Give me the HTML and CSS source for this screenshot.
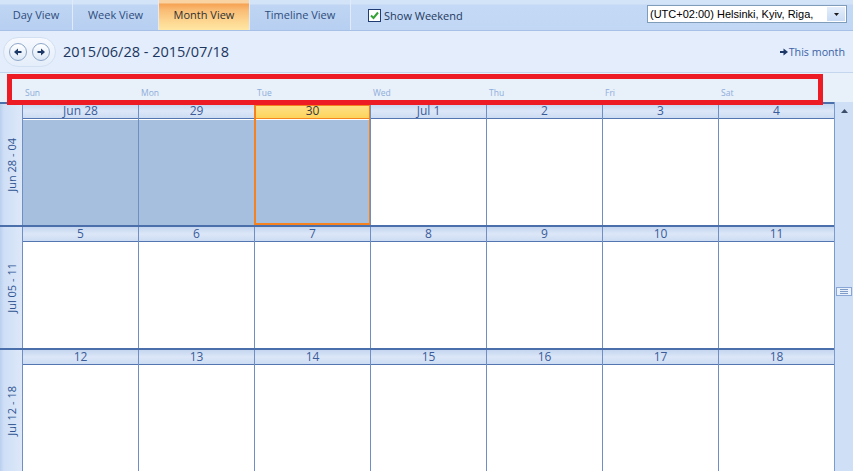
FILE: index.html
```html
<!DOCTYPE html>
<html>
<head>
<meta charset="utf-8">
<link rel="stylesheet" href="styles.css">
</head>
<body>
<div class="toolbar">
  <div class="tab tab-day">Day View</div>
  <div class="tab tab-week">Week View</div>
  <div class="tab tab-month active">Month View</div>
  <div class="tab tab-timeline">Timeline View</div>
  <div class="weekend">
    <span class="check"><svg width="11" height="11" viewBox="0 0 11 11"><polyline points="2,5.5 4.5,8 9,2.5" fill="none" stroke="#36a336" stroke-width="2"/></svg></span>
    <span>Show Weekend</span>
  </div>
  <div class="tz">
    <span class="tz-text">(UTC+02:00) Helsinki, Kyiv, Riga,</span>
    <span class="tz-btn"><svg width="5" height="3" viewBox="0 0 5 3"><polygon points="0,0 5,0 2.5,3" fill="#1a1a1a"/></svg></span>
  </div>
</div>

<div class="nav">
  <div class="pill">
    <span class="circ"><svg width="10" height="10" viewBox="0 0 10 10"><polygon points="1,5 5,1.5 5,8.5" fill="#1d3866"/><rect x="4.5" y="4" width="4" height="2" fill="#1d3866"/></svg></span>
    <span class="circ"><svg width="10" height="10" viewBox="0 0 10 10"><polygon points="9,5 5,1.5 5,8.5" fill="#1d3866"/><rect x="1.5" y="4" width="4" height="2" fill="#1d3866"/></svg></span>
  </div>
  <div class="range">2015/06/28 - 2015/07/18</div>
  <div class="thismonth"><svg width="8" height="8" viewBox="0 0 8 8"><polygon points="3.5,0.5 8,4 3.5,7.5" fill="#1d3866"/><rect x="0" y="3" width="4" height="2" fill="#1d3866"/></svg><span>This month</span></div>
</div>

<div class="dayhead">
  <div></div>
  <div class="dh">Sun</div>
  <div class="dh">Mon</div>
  <div class="dh">Tue</div>
  <div class="dh">Wed</div>
  <div class="dh">Thu</div>
  <div class="dh">Fri</div>
  <div class="dh">Sat</div>
  <div></div>
  <div class="annot"></div>
</div>

<div class="grid">
  <div class="weeks">
    <div class="week">
      <div class="wlabel"><span>Jun 28 - 04</span></div>
      <div class="day sel"><div class="dhdr">Jun 28</div><div class="dbody"></div></div>
      <div class="day sel"><div class="dhdr">29</div><div class="dbody"></div></div>
      <div class="day sel today"><div class="dhdr">30</div><div class="dbody"></div></div>
      <div class="day"><div class="dhdr">Jul 1</div><div class="dbody"></div></div>
      <div class="day"><div class="dhdr">2</div><div class="dbody"></div></div>
      <div class="day"><div class="dhdr">3</div><div class="dbody"></div></div>
      <div class="day"><div class="dhdr">4</div><div class="dbody"></div></div>
    </div>
    <div class="week">
      <div class="wlabel"><span>Jul 05 - 11</span></div>
      <div class="day"><div class="dhdr">5</div><div class="dbody"></div></div>
      <div class="day"><div class="dhdr">6</div><div class="dbody"></div></div>
      <div class="day"><div class="dhdr">7</div><div class="dbody"></div></div>
      <div class="day"><div class="dhdr">8</div><div class="dbody"></div></div>
      <div class="day"><div class="dhdr">9</div><div class="dbody"></div></div>
      <div class="day"><div class="dhdr">10</div><div class="dbody"></div></div>
      <div class="day"><div class="dhdr">11</div><div class="dbody"></div></div>
    </div>
    <div class="week">
      <div class="wlabel"><span>Jul 12 - 18</span></div>
      <div class="day"><div class="dhdr">12</div><div class="dbody"></div></div>
      <div class="day"><div class="dhdr">13</div><div class="dbody"></div></div>
      <div class="day"><div class="dhdr">14</div><div class="dbody"></div></div>
      <div class="day"><div class="dhdr">15</div><div class="dbody"></div></div>
      <div class="day"><div class="dhdr">16</div><div class="dbody"></div></div>
      <div class="day"><div class="dhdr">17</div><div class="dbody"></div></div>
      <div class="day"><div class="dhdr">18</div><div class="dbody"></div></div>
    </div>
  </div>
  <div class="scroll">
    <div class="up"><svg width="7" height="4" viewBox="0 0 7 4"><polygon points="0,4 7,4 3.5,0" fill="#3b4d69"/></svg></div>
    <div class="thumb"><span></span><span></span><span></span></div>
  </div>
</div>
</body>
</html>
```

FILE: styles.css
```css
* { box-sizing: border-box; }
html, body { margin: 0; padding: 0; }
body {
  width: 853px;
  height: 471px;
  overflow: hidden;
  background: #ffffff;
  font-family: "Open Sans", "Noto Sans", sans-serif;
}

/* ---------- toolbar ---------- */
.toolbar {
  display: flex;
  height: 31px;
  border-bottom: 1px solid #a6c0e6;
  background: linear-gradient(#d3e3f8 0, #d3e3f8 4px, #c4d9f5 5px, #c1d7f4 100%);
}
.tab {
  height: 30px;
  line-height: 30px;
  text-align: center;
  font-size: 11px;
  color: #2e4d7b;
  border-right: 1px solid #e0eafa;
  background: linear-gradient(#d3e3f8 0, #d3e3f8 4px, #bfd5f3 5px, #b7cff1 100%);
  white-space: nowrap;
}
.tab-day { width: 73px; }
.tab-week { width: 86px; }
.tab-month { width: 91px; }
.tab-timeline { width: 101px; }
.tab.active {
  color: #303030;
  background: linear-gradient(#f9d3a2 0, #f9d3a2 3px, #f6a253 4px, #f9bd76 35%, #fdd993 75%, #ffe7a4 100%);
}
.weekend {
  display: flex;
  align-items: center;
  gap: 3px;
  padding-left: 17px;
  font-size: 11px;
  color: #1e3a5f;
}
.check {
  width: 13px;
  height: 13px;
  border: 1px solid #1f3d73;
  background: #ffffff;
  display: flex;
  align-items: center;
  justify-content: center;
}
.tz {
  margin-left: auto;
  margin-right: 6px;
  margin-top: 5px;
  width: 200px;
  height: 18px;
  border: 1px solid #7f9db9;
  background: #ffffff;
  display: flex;
}
.tz-text {
  flex: 1;
  font-family: "Liberation Sans", Arial, sans-serif;
  font-size: 11px;
  line-height: 16px;
  padding-left: 2px;
  color: #000000;
  white-space: nowrap;
}
.tz-btn {
  width: 18px;
  margin: 1px;
  display: flex;
  align-items: center;
  justify-content: center;
  background: linear-gradient(#e4eefb, #c9dbf4);
}

/* ---------- nav row ---------- */
.nav {
  display: flex;
  align-items: center;
  height: 42px;
  padding-left: 3px;
  background: #e3edfb;
  border-bottom: 1px solid #c4d5ee;
}
.pill {
  display: flex;
  align-items: center;
  gap: 5px;
  height: 30px;
  padding: 0 5px;
  border: 1px solid #d3e0f2;
  border-radius: 15px;
  background: linear-gradient(#f6f9fe, #e4edfa);
}
.circ {
  width: 18px;
  height: 18px;
  border-radius: 50%;
  border: 1px solid #8ea6c9;
  background: linear-gradient(#ffffff, #dce7f6);
  display: flex;
  align-items: center;
  justify-content: center;
}
.range {
  margin-left: 7px;
  font-size: 14.5px;
  color: #1b365f;
  white-space: nowrap;
}
.thismonth {
  margin-left: auto;
  margin-right: 8px;
  display: flex;
  align-items: center;
  gap: 1px;
  font-size: 10.7px;
  color: #3b63a6;
}

/* ---------- day-name header ---------- */
.dayhead {
  position: relative;
  display: grid;
  grid-template-columns: 22px repeat(7, 116px) 19px;
  height: 29px;
  background: #e8f0fa;
}
.dh {
  padding-left: 3px;
  padding-top: 14px;
  font-size: 8.5px;
  line-height: 12px;
  color: #8dadd9;
}
.annot {
  position: absolute;
  left: 7px;
  top: 1px;
  width: 816px;
  height: 31px;
  border: 5px solid #ed1c24;
  z-index: 5;
}

/* ---------- month grid ---------- */
.grid {
  display: flex;
  height: 369px;
}
.weeks {
  width: 834px;
}
.week {
  display: grid;
  grid-template-columns: 22px repeat(7, 116px);
  height: 123px;
  border-top: 2px solid #4a6fab;
}
.wlabel {
  display: flex;
  align-items: center;
  justify-content: center;
  background: linear-gradient(90deg, #b9cfef 0, #cfdff6 4px, #dde8f9 100%);
}
.wlabel span {
  writing-mode: vertical-rl;
  transform: rotate(180deg);
  font-size: 11px;
  color: #2f5491;
  white-space: nowrap;
}
.day {
  position: relative;
  display: flex;
  flex-direction: column;
  border-left: 1px solid #6e8fc3;
}
.dhdr {
  height: 15px;
  border-bottom: 1px solid #5476b0;
  background: linear-gradient(#c5d6ef, #dce7f8 50%, #cddcf3);
  text-align: center;
  font-size: 12px;
  line-height: 14px;
  color: #3b5c99;
}
.dbody {
  flex: 1;
  border-top: 1px solid #ffffff;
  background: #ffffff;
}
.day.sel .dbody { background: #a6bfdf; }
.day.today .dhdr {
  color: #3a3a3a;
  border-bottom-color: #f5861f;
  background: linear-gradient(#fde38f, #fdd35a);
}
.day.today::after {
  content: "";
  position: absolute;
  top: 0;
  left: -1px;
  right: -1px;
  bottom: 0;
  border: 2px solid #f5821f;
  pointer-events: none;
}

/* ---------- scrollbar ---------- */
.scroll {
  width: 19px;
  border-left: 1px solid #7a9bcf;
  background: #cfdff6;
  display: flex;
  flex-direction: column;
  align-items: center;
}
.up {
  height: 17px;
  width: 100%;
  display: flex;
  align-items: center;
  justify-content: center;
}
.thumb {
  margin-top: 168px;
  width: 16px;
  height: 9px;
  border: 1px solid #8aa6d4;
  background: #e8f0fb;
  display: flex;
  flex-direction: column;
  align-items: center;
  justify-content: center;
  gap: 1px;
}
.thumb span {
  display: block;
  width: 8px;
  height: 1px;
  background: #7f9cc9;
}
```
